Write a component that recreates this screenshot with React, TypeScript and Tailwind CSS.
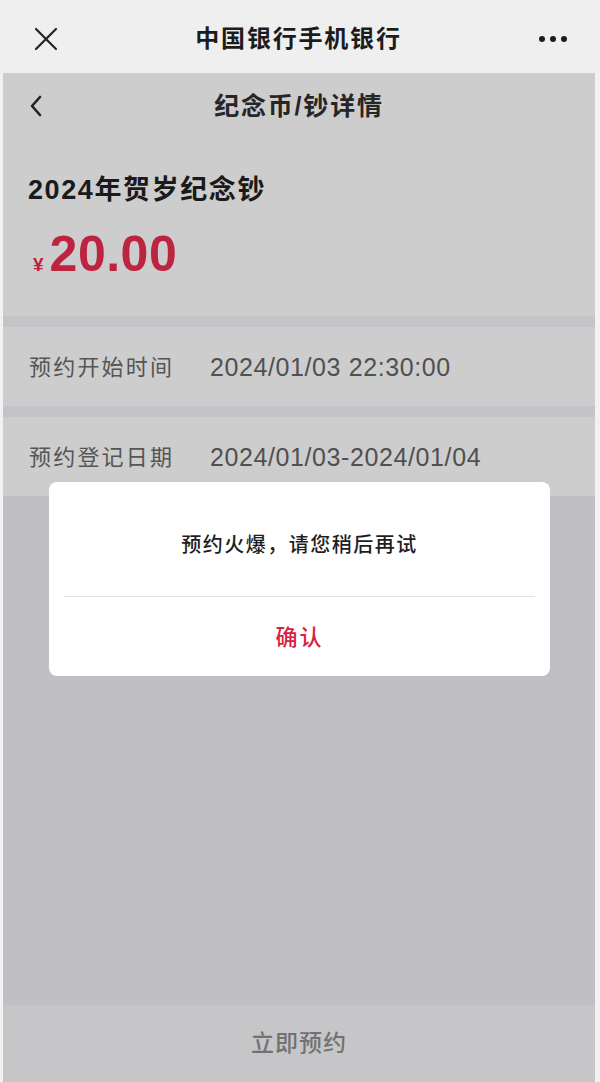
import React from "react";

// Font stack for Chinese text with Latin digits
const font = '"Liberation Sans", "Noto Sans CJK SC", sans-serif';

function CloseIcon() {
  return (
    <svg width="24" height="24" viewBox="0 0 24 24" className="text-[#222]">
      <path d="M2 2 L22 22 M22 2 L2 22" stroke="currentColor" strokeWidth="2.2" strokeLinecap="round" />
    </svg>
  );
}

function BackIcon() {
  return (
    <svg width="14" height="22" viewBox="0 0 14 22" className="text-[#222]">
      <path d="M11 2 L3 11 L11 20" stroke="currentColor" strokeWidth="2.6" fill="none" strokeLinecap="round" strokeLinejoin="round" />
    </svg>
  );
}

function InfoRow({ label, value }: { label: string; value: string }) {
  return (
    <div className="h-[79px] bg-[#cdcdcd] flex items-center pl-[26px] pt-[2px]">
      <span className="w-[181px] text-[22px] tracking-[2.2px] text-[#555555]">{label}</span>
      <span className="text-[25px] tracking-[0.6px] text-[#505050]">{value}</span>
    </div>
  );
}

export default function App() {
  return (
    <div className="relative w-[600px] h-[1082px] bg-[#f2f2f2] flex flex-col overflow-hidden" style={{ fontFamily: font }}>
      {/* WebView header */}
      <div className="h-[73px] shrink-0 bg-[#efefef] flex items-center justify-between pl-[34px] pr-[33px] pt-[5px]">
        <CloseIcon />
        <span className="text-[24px] font-semibold tracking-[1.8px] text-[#1c1c1c]">中国银行手机银行</span>
        <div className="flex gap-[5px]">
          <span className="w-[6px] h-[6px] rounded-full bg-[#1c1c1c]" />
          <span className="w-[6px] h-[6px] rounded-full bg-[#1c1c1c]" />
          <span className="w-[6px] h-[6px] rounded-full bg-[#1c1c1c]" />
        </div>
      </div>

      <div className="flex-1 flex pl-[3px] pr-[5px]">
        <div className="flex-1 flex flex-col">
          {/* Page nav */}
          <div className="relative h-[67px] bg-[#cdcdcd] flex items-center justify-center">
            <div className="absolute left-[26px] top-[22px]">
              <BackIcon />
            </div>
            <span className="text-[25px] font-semibold tracking-[1.8px] text-[#262626]">纪念币/钞详情</span>
          </div>

          {/* Product card */}
          <div className="h-[176px] bg-[#cdcdcd] pl-[25px] pt-[33px]">
            <div className="text-[27px] font-bold tracking-[1.6px] text-[#1a1a1a] leading-[34px]">2024年贺岁纪念钞</div>
            <div className="mt-[20px] flex items-baseline text-[#bd2440]">
              <span className="text-[19px] font-bold ml-[5px] mr-[6px]">¥</span>
              <span className="text-[50px] font-bold leading-[54px] tracking-[0.5px]">20.00</span>
            </div>
          </div>

          <div className="h-[11px] bg-[#c4c3c8]" />
          <InfoRow label="预约开始时间" value="2024/01/03 22:30:00" />
          <div className="h-[11px] bg-[#c4c3c8]" />
          <InfoRow label="预约登记日期" value="2024/01/03-2024/01/04" />

          <div className="flex-1 bg-[#c0bfc4]" />

          {/* Bottom action */}
          <div className="h-[77px] bg-[#c6c6c8] flex items-center justify-center">
            <span className="text-[23px] font-medium tracking-[1px] text-[#727272]">立即预约</span>
          </div>
        </div>
      </div>

      {/* Alert dialog */}
      <div className="absolute left-[49px] top-[482px] w-[501px] h-[194px] bg-white rounded-[8px] flex flex-col">
        <div className="h-[114px] flex items-center justify-center pt-[12px]">
          <span className="text-[20px] font-medium tracking-[1.5px] text-[#1e1e1e]">预约火爆，请您稍后再试</span>
        </div>
        <div className="mx-[15px] h-px bg-[#e4e4e8]" />
        <div className="flex-1 flex items-center justify-center pt-[2px]">
          <span className="text-[22px] font-medium tracking-[2px] text-[#d9213f]">确认</span>
        </div>
      </div>
    </div>
  );
}
